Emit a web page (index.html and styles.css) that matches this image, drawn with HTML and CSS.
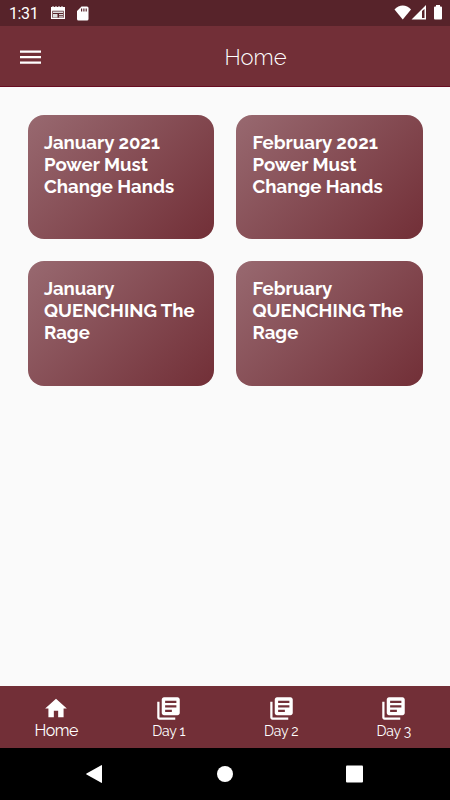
FILE: index.html
```html
<!DOCTYPE html>
<html lang="en">
<head>
    <meta charset="UTF-8">
    <meta name="viewport" content="width=device-width, initial-scale=1.0">
    <title>Home</title>
    <link rel="stylesheet" href="styles.css">
</head>
<body>
    <div class="status-bar">
        <span class="time">1:31</span>
        <svg class="news-icon" width="14" height="14" viewBox="0 0 14 14">
            <path fill="#fff" fill-rule="evenodd" d="M0 1h1.500V0h1v1h2V0h1v1h2V0h1v1h2V0h1v1H14v12H0zM1.300 4.800v7h11.400v-7z"/>
            <path fill="#ddd" d="M2 5.500h10v1.500H2zM2 8h4.500v3.500H2zM8 8h4v1.300H8zM8 10.200h4v1.300H8z"/>
        </svg>
        <svg class="sd-icon" width="12" height="15" viewBox="0 0 12 15">
            <path fill="#fff" fill-rule="evenodd" d="M4.500.5H10a1.500 1.500 0 0 1 1.500 1.500v11A1.500 1.500 0 0 1 10 14.500H1.500A1.500 1.500 0 0 1 0 13V5zM4 2.500v3h1.200v-3zM6.300 2.500v3h1.200v-3zM8.600 2.500v3h1.200v-3z"/>
        </svg>
        <svg class="signal-icons" width="50" height="16" viewBox="0 0 50 16">
            <path fill="#fff" d="M.5 4.500C5-1 12.500-1 17 4.500L8.750 14.500z"/>
            <path fill="#fff" fill-rule="evenodd" d="M32 0v14.500H17.500zM28 6v7h2.500V4z"/>
            <path fill="#fff" d="M42 0h4v1.500h1q1 0 1 1v11q0 1-1 1h-6q-1 0-1-1v-11q0-1 1-1h1z"/>
        </svg>
    </div>

    <header class="header">
        <svg class="menu-icon" width="21" height="15" viewBox="0 0 21 15">
            <path fill="#fff" d="M0 .5h21v2.300H0zM0 6h21v2.300H0zM0 11.500h21v2.300H0z"/>
        </svg>
        <h1>Home</h1>
    </header>

    <main class="cards">
        <div class="card">January 2021 Power Must Change Hands</div>
        <div class="card">February 2021 Power Must Change Hands</div>
        <div class="card">January QUENCHING The Rage</div>
        <div class="card">February QUENCHING The Rage</div>
    </main>

    <nav class="tabs">
        <a class="tab active">
            <svg width="26" height="27" viewBox="0 0 24 24"><path d="M10 20v-6h4v6h5v-8h3L12 3 2 12h3v8z"/></svg>
            <span>Home</span>
        </a>
        <a class="tab">
            <svg width="27" height="27" viewBox="0 0 24 24"><path d="M4 6H2v14c0 1.100.9 2 2 2h14v-2H4V6zm16-4H8c-1.100 0-2 .9-2 2v12c0 1.100.9 2 2 2h12c1.100 0 2-.9 2-2V4c0-1.100-.9-2-2-2zm-1 9H9V9h10v2zm-4 4H9v-2h6v2zm4-8H9V5h10v2z"/></svg>
            <span>Day 1</span>
        </a>
        <a class="tab">
            <svg width="27" height="27" viewBox="0 0 24 24"><path d="M4 6H2v14c0 1.100.9 2 2 2h14v-2H4V6zm16-4H8c-1.100 0-2 .9-2 2v12c0 1.100.9 2 2 2h12c1.100 0 2-.9 2-2V4c0-1.100-.9-2-2-2zm-1 9H9V9h10v2zm-4 4H9v-2h6v2zm4-8H9V5h10v2z"/></svg>
            <span>Day 2</span>
        </a>
        <a class="tab">
            <svg width="27" height="27" viewBox="0 0 24 24"><path d="M4 6H2v14c0 1.100.9 2 2 2h14v-2H4V6zm16-4H8c-1.100 0-2 .9-2 2v12c0 1.100.9 2 2 2h12c1.100 0 2-.9 2-2V4c0-1.100-.9-2-2-2zm-1 9H9V9h10v2zm-4 4H9v-2h6v2zm4-8H9V5h10v2z"/></svg>
            <span>Day 3</span>
        </a>
    </nav>

    <div class="system-nav">
        <svg width="17" height="20" viewBox="0 0 17 20"><path fill="#fff" d="M16 1.500v17q0 .7-.7.300L.5 10.500q-.7-.5 0-1L15.300 1.200Q16 .8 16 1.500z"/></svg>
        <svg width="18" height="18" viewBox="0 0 18 18"><circle cx="9" cy="9" r="8" fill="#fff"/></svg>
        <svg width="18" height="18" viewBox="0 0 18 18"><rect x="0" y=".5" width="17" height="17" rx="1" fill="#fff"/></svg>
    </div>
</body>
</html>
```

FILE: styles.css
```css
* {
    box-sizing: border-box;
}
body {
    margin: 0;
    height: 100vh;
    display: flex;
    flex-direction: column;
    background-color: #fafafa;
    color: #fff;
    font-family: Raleway, Lato, sans-serif;
    overflow: hidden;
}
.status-bar {
    display: flex;
    align-items: center;
    height: 26px;
    padding-left: 9px;
    padding-right: 1px;
    background-color: #57232a;
}
.time {
    width: 42px;
    font-family: Roboto, sans-serif;
    font-size: 16px;
    letter-spacing: -0.4px;
    line-height: 26px;
    padding-top: 2px;
}
.sd-icon {
    margin-left: 12px;
}
.signal-icons {
    margin-left: auto;
    margin-right: 5px;
}
.header {
    display: flex;
    align-items: center;
    height: 61px;
    padding-top: 2px;
    padding-left: 20px;
    background-color: #722f37;
    border-bottom: 1px solid #680d22;
}
.header h1 {
    margin: 0 0 0 183.5px;
    font-size: 22px;
    font-weight: 300;
    line-height: 30px;
}
.cards {
    flex: 1;
    display: grid;
    grid-template-columns: 186.5px 186.5px;
    grid-auto-rows: 124.5px;
    gap: 22px;
    padding: 27.5px;
}
.card {
    padding: 17px 14px 16px 16.5px;
    border-radius: 16px;
    background: linear-gradient(135deg, #986970, #722f37);
    font-size: 18.6px;
    font-weight: 700;
    line-height: 22px;
}
.tabs {
    display: flex;
    height: 62px;
    background-color: #722f37;
}
.tab {
    flex: 1;
    display: flex;
    flex-direction: column;
    align-items: center;
    padding-top: 8.5px;
    font-size: 14px;
    font-weight: 400;
    letter-spacing: -0.2px;
    line-height: 19px;
}
.tab svg {
    fill: #fff;
}
.tab.active {
    font-size: 16px;
    letter-spacing: -0.4px;
    line-height: 17px;
}
.system-nav {
    display: flex;
    justify-content: space-between;
    align-items: center;
    height: 52px;
    padding: 0 86px;
    background-color: #000;
}
```
